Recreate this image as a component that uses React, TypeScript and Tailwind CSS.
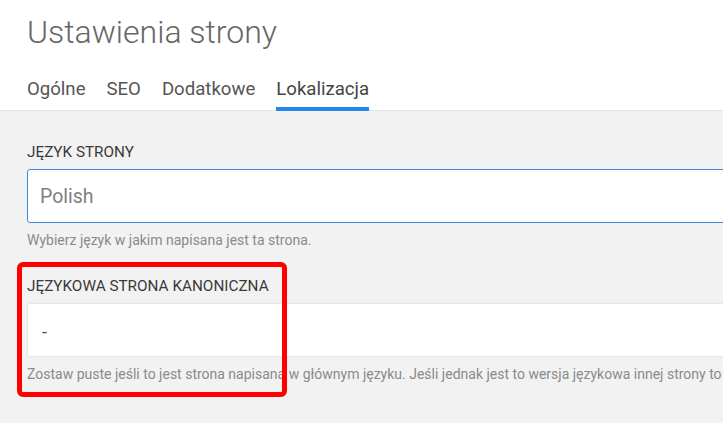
import React from "react";

export default function App() {
  return (
    <div
      className="w-[723px] h-[423px] overflow-hidden bg-[#f2f2f2] relative"
      style={{ fontFamily: "Roboto, 'Noto Sans', sans-serif" }}
    >
      <div className="bg-white border-b border-[#e2e2e2] pl-[27px] pt-[12px]">
        <h1 className="text-[32px] leading-[40px] font-light text-[#666666] whitespace-nowrap">
          Ustawienia strony
        </h1>
        <nav className="flex gap-[21px] mt-[25px] -mb-px text-[18.6px] leading-[24px] text-[#555555] whitespace-nowrap">
          <div className="pb-[10px]">Ogólne</div>
          <div className="pb-[10px]">SEO</div>
          <div className="pb-[10px]">Dodatkowe</div>
          <div className="pb-[6px] border-b-4 border-[#2189ea] text-[#444444]">Lokalizacja</div>
        </nav>
      </div>

      <div className="pl-[27px] pt-[31px]">
        <div className="w-[900px]">
          <div className="text-[15.3px] leading-[20px] text-[#3a3a3a] whitespace-nowrap">JĘZYK STRONY</div>
          <div className="mt-[7px] h-[54px] bg-white border border-[#3a88e0] rounded-[3px] flex items-center pl-[12px] pt-[2px] text-[19.5px] text-[#808080]">
            Polish
          </div>
          <div className="mt-[8px] text-[14px] leading-[18px] text-[#8a8a8a] whitespace-nowrap">
            Wybierz język w jakim napisana jest ta strona.
          </div>
        </div>

        <div className="w-[900px] mt-[27px]">
          <div className="text-[15.3px] leading-[20px] text-[#3a3a3a] whitespace-nowrap">JĘZYKOWA STRONA KANONICZNA</div>
          <div className="mt-[7px] h-[54px] bg-white border border-[#e6e6e6] rounded-[3px] flex items-center pl-[14px] pt-[2px] text-[18px] text-[#555555]">
            -
          </div>
          <div className="mt-[8px] text-[14px] leading-[18px] text-[#8a8a8a] whitespace-nowrap">
            Zostaw puste jeśli to jest strona napisana w głównym języku. Jeśli jednak jest to wersja językowa innej strony to
          </div>
        </div>
      </div>

      <div className="absolute left-[17px] top-[262px] w-[270px] h-[135px] border-[5px] border-[#ff0000] rounded-[6px] pointer-events-none" />
    </div>
  );
}
